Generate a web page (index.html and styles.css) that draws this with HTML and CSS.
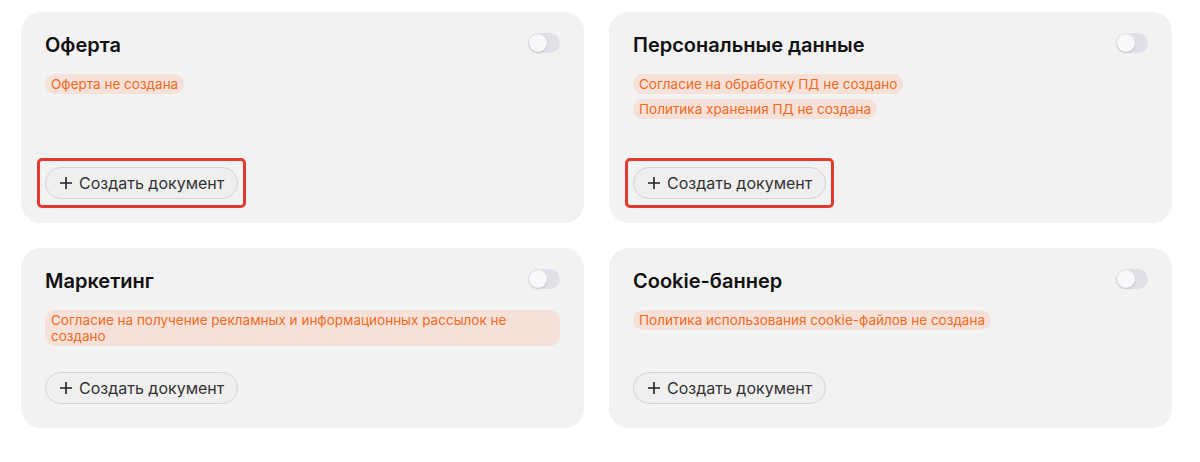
FILE: index.html
```html
<!DOCTYPE html>
<html lang="ru">
<head>
    <meta charset="UTF-8">
    <meta name="viewport" content="width=device-width, initial-scale=1.0">
    <title>Документы</title>
    <link rel="stylesheet" href="styles.css">
</head>
<body>
    <div class="docs-grid">
        <!-- Оферта -->
        <div class="doc-card tall">
            <div class="doc-head">
                <h3 class="doc-title">Оферта</h3>
                <span class="switch"><span class="switch-knob"></span></span>
            </div>
            <div class="doc-tags">
                <span class="tag">Оферта не создана</span>
            </div>
            <div class="doc-actions">
                <span class="btn-wrap marked">
                    <button class="btn-create">
                        <svg class="plus" viewBox="0 0 14 14" width="14" height="14"><path d="M7 1v12M1 7h12" stroke="currentColor" stroke-width="1.6" fill="none"/></svg>
                        Создать документ
                    </button>
                </span>
            </div>
        </div>

        <!-- Персональные данные -->
        <div class="doc-card tall">
            <div class="doc-head">
                <h3 class="doc-title">Персональные данные</h3>
                <span class="switch"><span class="switch-knob"></span></span>
            </div>
            <div class="doc-tags">
                <span class="tag">Согласие на обработку ПД не создано</span>
                <span class="tag">Политика хранения ПД не создана</span>
            </div>
            <div class="doc-actions">
                <span class="btn-wrap marked">
                    <button class="btn-create">
                        <svg class="plus" viewBox="0 0 14 14" width="14" height="14"><path d="M7 1v12M1 7h12" stroke="currentColor" stroke-width="1.6" fill="none"/></svg>
                        Создать документ
                    </button>
                </span>
            </div>
        </div>

        <!-- Маркетинг -->
        <div class="doc-card">
            <div class="doc-head">
                <h3 class="doc-title">Маркетинг</h3>
                <span class="switch"><span class="switch-knob"></span></span>
            </div>
            <div class="doc-tags">
                <span class="tag">Согласие на получение рекламных и информационных рассылок не создано</span>
            </div>
            <div class="doc-actions">
                <span class="btn-wrap">
                    <button class="btn-create">
                        <svg class="plus" viewBox="0 0 14 14" width="14" height="14"><path d="M7 1v12M1 7h12" stroke="currentColor" stroke-width="1.6" fill="none"/></svg>
                        Создать документ
                    </button>
                </span>
            </div>
        </div>

        <!-- Cookie -->
        <div class="doc-card">
            <div class="doc-head">
                <h3 class="doc-title">Cookie-баннер</h3>
                <span class="switch"><span class="switch-knob"></span></span>
            </div>
            <div class="doc-tags">
                <span class="tag">Политика использования cookie-файлов не создана</span>
            </div>
            <div class="doc-actions">
                <span class="btn-wrap">
                    <button class="btn-create">
                        <svg class="plus" viewBox="0 0 14 14" width="14" height="14"><path d="M7 1v12M1 7h12" stroke="currentColor" stroke-width="1.6" fill="none"/></svg>
                        Создать документ
                    </button>
                </span>
            </div>
        </div>
    </div>
</body>
</html>
```

FILE: styles.css
```css
* {
    margin: 0;
    padding: 0;
    box-sizing: border-box;
    font-family: Inter, "Noto Sans", sans-serif;
}

body {
    background: #fff;
    color: #111;
}

/* Сетка карточек */
.docs-grid {
    display: grid;
    grid-template-columns: 563px 563px;
    column-gap: 25px;
    row-gap: 25px;
    padding: 12px 0 0 21px;
}

.doc-card {
    display: flex;
    flex-direction: column;
    background: #f2f2f2;
    border-radius: 20px;
    padding: 19px 24px 24px;
    min-height: 180px;
}

.doc-card.tall {
    min-height: 211px;
}

.doc-head {
    display: flex;
    justify-content: space-between;
    align-items: flex-start;
}

.doc-title {
    font-size: 20px;
    line-height: 28px;
    font-weight: 600;
    color: #111;
}

/* Переключатель (выключен) */
.switch {
    width: 32px;
    height: 20px;
    margin-top: 2px;
    border-radius: 10px;
    background: #dfe1e6;
    padding: 1px;
    display: flex;
}

.switch-knob {
    width: 18px;
    height: 18px;
    border-radius: 50%;
    background: #f8f8fa;
    box-shadow: 0 1px 2px rgba(0,0,0,0.15);
}

.doc-tags {
    display: flex;
    flex-direction: column;
    align-items: flex-start;
    gap: 5px;
    margin-top: 15px;
}

.tag {
    font-size: 13.5px;
    line-height: 16px;
    padding: 2px 6px;
    color: #f26a1f;
    background: #f5e1d8;
    border-radius: 10px;
}

.doc-actions {
    margin-top: auto;
    padding-top: 25px;
}

.btn-wrap {
    position: relative;
    display: inline-flex;
}

/* Красная рамка поверх кнопки */
.btn-wrap.marked::after {
    content: "";
    position: absolute;
    top: -9px;
    left: -8px;
    right: -8px;
    bottom: -9px;
    border: 3px solid #e23a2f;
    border-radius: 5px;
    pointer-events: none;
}

.btn-create {
    display: inline-flex;
    align-items: center;
    gap: 6px;
    height: 32px;
    padding: 0 13px;
    background: #efefef;
    border: 1px solid #d4d4d4;
    border-radius: 16px;
    font-size: 16px;
    color: #333;
    cursor: pointer;
}

.plus {
    color: #222;
}
```
